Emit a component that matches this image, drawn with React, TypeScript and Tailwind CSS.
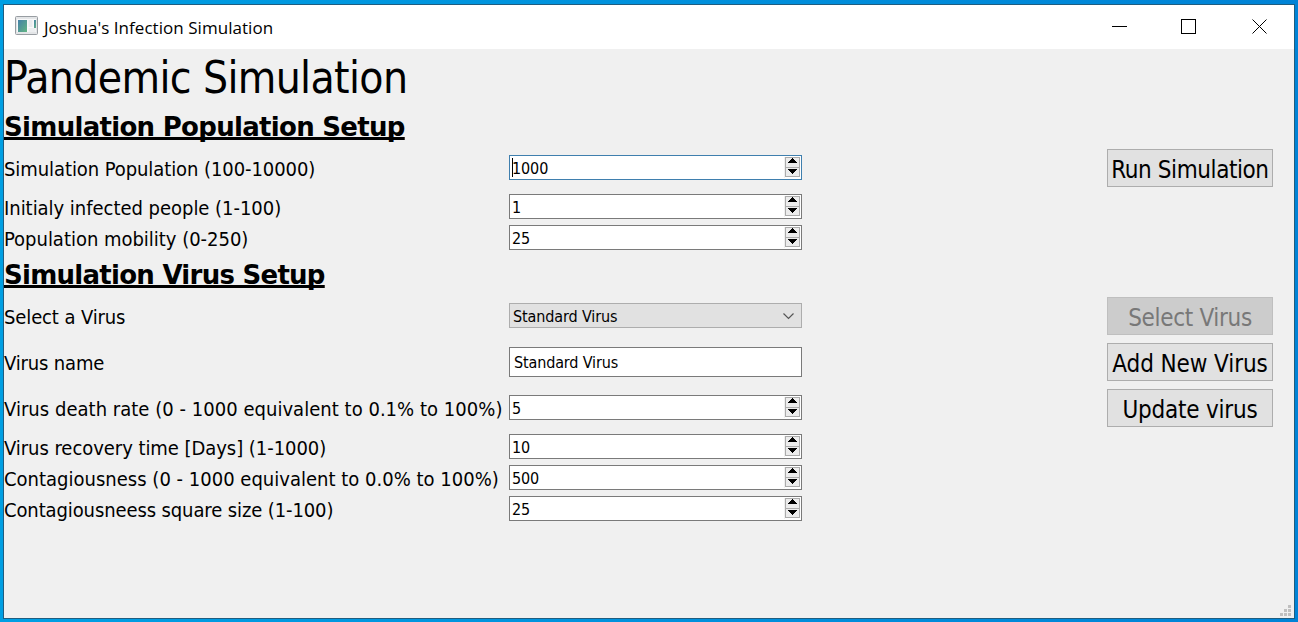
import type { ReactNode } from "react";

function SpinArrows() {
  return (
    <div className="mr-px mt-px flex h-5 w-[15px] flex-col border border-[#acacac] bg-[#ececec]">
      <svg className="h-[9px] w-[13px]" viewBox="0 0 13 9" shapeRendering="crispEdges">
        <path d="M6 0h1v1h1v1h1v1h1v1h1v1H2V4h1V3h1V2h1V1h1z" fill="#000" />
      </svg>
      <div className="h-px bg-[#acacac]" />
      <svg className="h-2 w-[13px]" viewBox="0 0 13 8" shapeRendering="crispEdges">
        <path d="M2 1h9v1h-1v1H9v1H8v1H7v1H6V5H5V4H4V3H3V2H2z" fill="#000" />
      </svg>
    </div>
  );
}

function SpinBox({ value, focused = false }: { value: string; focused?: boolean }) {
  return (
    <div
      className={`flex h-[25px] w-[293px] justify-between border bg-white ${
        focused ? "border-[#3f7fae]" : "border-[#7a7a7a]"
      }`}
    >
      <div className="flex pl-[2px]">
        <span className={`mt-[2px] h-[19px] w-px ${focused ? "bg-black" : "bg-transparent"}`} />
        <span className="-ml-px text-[16px] leading-[26px] tracking-[-0.1px]">{value}</span>
      </div>
      <div className="flex bg-white">
        <div className="my-px w-px bg-[#f0f0f0]" />
        <SpinArrows />
      </div>
    </div>
  );
}

function PushButton({
  children,
  className,
  disabled = false,
}: {
  children: ReactNode;
  className: string;
  disabled?: boolean;
}) {
  return (
    <button
      disabled={disabled}
      className={`flex h-[38px] w-[166px] items-center justify-center whitespace-nowrap border pt-[3px] text-[24px] leading-[34px] ${
        disabled ? "border-[#bfbfbf] bg-[#cccccc] text-[#787878]" : "border-[#adadad] bg-[#e1e1e1] text-black"
      } ${className}`}
    >
      {children}
    </button>
  );
}

function Row({
  label,
  labelClass,
  rowClass,
  fieldClass = "",
  field,
  button,
}: {
  label: string;
  labelClass: string;
  rowClass: string;
  fieldClass?: string;
  field: ReactNode;
  button?: ReactNode;
}) {
  return (
    <div className={`grid grid-cols-[505px_293px_1fr_166px] pr-[21px] ${rowClass}`}>
      <label className={`self-center whitespace-nowrap text-[20px] leading-[24px] ${labelClass}`}>
        {label}
      </label>
      <div className={fieldClass}>{field}</div>
      <div />
      <div>{button}</div>
    </div>
  );
}

function Heading({ children, className }: { children: ReactNode; className: string }) {
  return (
    <h2
      className={`h-[38px] pt-px font-['DejaVu_Sans',sans-serif] text-[26px] font-bold leading-[38px] underline decoration-[3px] underline-offset-[1px] [text-decoration-skip-ink:none] ${className}`}
    >
      {children}
    </h2>
  );
}

function TitleBar() {
  return (
    <header className="flex h-11 items-center bg-white pl-[11px] font-['Open_Sans',sans-serif]">
      <svg className="mb-1 h-[19px] w-[23px]" viewBox="0 0 23 19">
        <defs>
          <linearGradient id="pane" x1="0" y1="0" x2="1" y2="1">
            <stop offset="0" stopColor="#4580a8" />
            <stop offset="1" stopColor="#62b583" />
          </linearGradient>
        </defs>
        <rect x="0.5" y="0.5" width="22" height="18" rx="1" fill="#e3e5e7" stroke="#989da2" />
        <rect x="2" y="3" width="19" height="13" fill="#f8f9fa" />
        <rect x="3" y="4" width="9" height="12" fill="url(#pane)" />
        <rect x="13.5" y="4" width="4" height="7" fill="#e9ebed" />
        <rect x="13.5" y="12" width="7" height="4" fill="#eceef0" />
        <rect x="19" y="4" width="2" height="8" fill="url(#pane)" />
      </svg>
      <span className="ml-[6px] pt-[2px] text-[17px] leading-[24px] tracking-[0.04px] text-black">
        Joshua's Infection Simulation
      </span>
      <div className="ml-auto flex pr-[26px]">
        <svg className="h-4 w-4" viewBox="0 0 16 16" shapeRendering="crispEdges">
          <path d="M0 7h15v1H0z" fill="#000" />
        </svg>
        <svg className="ml-[53px] h-4 w-4" viewBox="0 0 16 16" shapeRendering="crispEdges">
          <path d="M.5.5h14v14H.5z" fill="none" stroke="#000" />
        </svg>
        <svg className="ml-[55px] h-4 w-4" viewBox="0 0 16 16">
          <path d="M.5.5l14 14M14.5.5l-14 14" fill="none" stroke="#000" />
        </svg>
      </div>
    </header>
  );
}

export default function App() {
  return (
    <div className="h-[622px] w-[1298px] overflow-hidden bg-linear-to-r from-[#009fe3] to-[#0083d6] pl-[3px] pt-1 font-['DejaVu_Sans_Condensed','DejaVu_Sans',sans-serif] text-black">
      <div className="flex h-[615px] w-[1292px] flex-col border border-[#1f5d80] bg-[#f0f0f0]">
        <TitleBar />
        <main className="relative flex flex-1 flex-col">
          <h1 className="h-[58px] text-[44px] leading-[58px] tracking-[-0.64px]">Pandemic Simulation</h1>

          <Heading className="tracking-[-0.7px]">Simulation Population Setup</Heading>
          <Row
            label="Simulation Population (100-10000)"
            labelClass="pt-px tracking-[-0.08px]"
            rowClass="mt-1 h-[38px]"
            fieldClass="pt-[6px]"
            field={<SpinBox value="1000" focused />}
            button={<PushButton className="tracking-[-0.42px]">Run Simulation</PushButton>}
          />
          <Row
            label="Initialy infected people (1-100)"
            labelClass="pt-[2px] tracking-[-0.03px]"
            rowClass="mt-[7px] h-[25px]"
            field={<SpinBox value="1" />}
          />
          <Row
            label="Population mobility (0-250)"
            labelClass="pt-[2px] tracking-[-0.02px]"
            rowClass="mt-[6px] h-[25px]"
            field={<SpinBox value="25" />}
          />

          <Heading className="mt-[5px] tracking-[-0.73px]">Simulation Virus Setup</Heading>
          <Row
            label="Select a Virus"
            labelClass="pt-px tracking-[-0.12px]"
            rowClass="mt-1 h-[38px]"
            fieldClass="pt-[6px]"
            field={
              <div className="flex h-[25px] w-[293px] items-center justify-between border border-[#adadad] bg-[#e1e1e1] pl-[3px] pr-[7px]">
                <span className="pt-[2px] text-[16px] leading-[23px] tracking-[-0.12px]">Standard Virus</span>
                <svg className="mt-px h-[7px] w-[11px]" viewBox="0 0 11 7">
                  <path d="M.5.5l5 5 5-5" fill="none" stroke="#555" strokeWidth="1.2" />
                </svg>
              </div>
            }
            button={
              <PushButton className="tracking-[-0.32px]" disabled>
                Select Virus
              </PushButton>
            }
          />
          <Row
            label="Virus name"
            labelClass="pt-px tracking-[-0.15px]"
            rowClass="mt-2 h-[38px]"
            fieldClass="pt-1"
            field={
              <div className="h-[30px] w-[293px] border border-[#7a7a7a] bg-white pl-1 text-[16px] leading-[30px] tracking-[-0.14px]">
                Standard Virus
              </div>
            }
            button={<PushButton className="tracking-[-0.09px]">Add New Virus</PushButton>}
          />
          <Row
            label="Virus death rate (0 - 1000 equivalent to 0.1% to 100%)"
            labelClass="pt-px tracking-[0.03px]"
            rowClass="mt-2 h-[38px]"
            fieldClass="pt-[6px]"
            field={<SpinBox value="5" />}
            button={<PushButton className="tracking-[-0.22px]">Update virus</PushButton>}
          />
          <Row
            label="Virus recovery time [Days] (1-1000)"
            labelClass="pt-[2px] tracking-[-0.05px]"
            rowClass="mt-[7px] h-[25px]"
            field={<SpinBox value="10" />}
          />
          <Row
            label="Contagiousness (0 - 1000 equivalent to 0.0% to 100%)"
            labelClass="pt-[2px] tracking-[0.01px]"
            rowClass="mt-[6px] h-[25px]"
            field={<SpinBox value="500" />}
          />
          <Row
            label="Contagiousneess square size (1-100)"
            labelClass="pt-[2px] tracking-[-0.11px]"
            rowClass="mt-[6px] h-[25px]"
            field={<SpinBox value="25" />}
          />

          <svg className="absolute bottom-[2px] right-[3px] h-[11px] w-[11px]" viewBox="0 0 11 11" shapeRendering="crispEdges">
            <path d="M8 0h3v3H8zM4 4h3v3H4zM8 4h3v3H8zM0 8h3v3H0zM4 8h3v3H4zM8 8h3v3H8z" fill="#bfbfbf" />
          </svg>
        </main>
      </div>
    </div>
  );
}
